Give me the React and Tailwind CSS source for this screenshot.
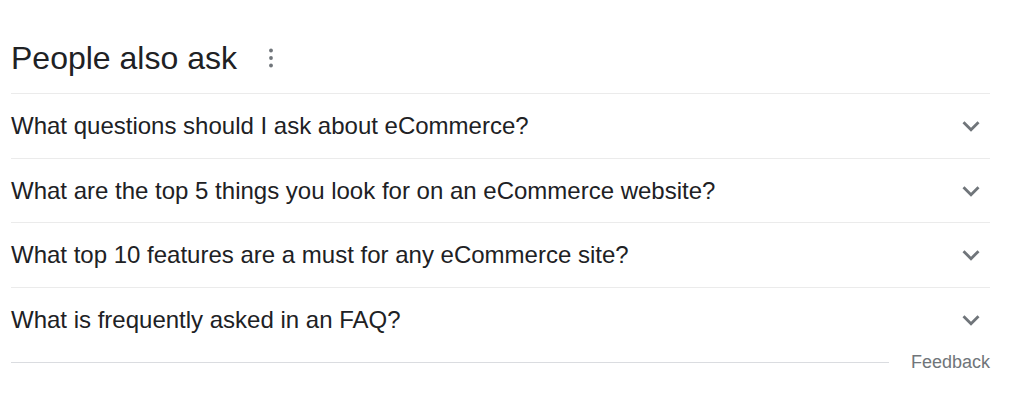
import React from "react";

const questions = [
  { q: "What questions should I ask about eCommerce?", h: "h-[65px]" },
  { q: "What are the top 5 things you look for on an eCommerce website?", h: "h-[64px]" },
  { q: "What top 10 features are a must for any eCommerce site?", h: "h-[65px]" },
  { q: "What is frequently asked in an FAQ?", h: "h-[65px]" },
];

function Chevron() {
  return (
    <svg viewBox="0 0 24 24" className="w-[34px] h-[34px] mr-[2px] shrink-0" fill="#70757a">
      <path d="M16.59 8.59L12 13.17 7.41 8.59 6 10l6 6 6-6z" />
    </svg>
  );
}

export default function App() {
  return (
    <div className="w-[1024px] h-[403px] bg-white pl-[11px] pr-[34px] text-[#202124]" style={{ fontFamily: '"Liberation Sans", Arial, sans-serif' }}>
      <div className="flex items-center pt-[38px] pb-[15px]">
        <h2 className="text-[32px] leading-[40px] font-normal">People also ask</h2>
        <svg viewBox="0 0 8 24" className="w-[8px] h-[24px] ml-[30px]" fill="#70757a">
          <circle cx="4" cy="4.5" r="1.9" />
          <circle cx="4" cy="12" r="1.9" />
          <circle cx="4" cy="19.5" r="1.9" />
        </svg>
      </div>
      {questions.map(({ q, h }) => (
        <div key={q} className={`flex items-center justify-between ${h} border-t border-[#ebebeb]`}>
          <span className="text-[24px] leading-[30px]">{q}</span>
          <Chevron />
        </div>
      ))}
      <div className="flex items-center h-[20px]">
        <div className="flex-1 h-px bg-[#dadce0]" />
        <span className="ml-[22px] text-[18px] leading-[20px] text-[#70757a]">Feedback</span>
      </div>
    </div>
  );
}
